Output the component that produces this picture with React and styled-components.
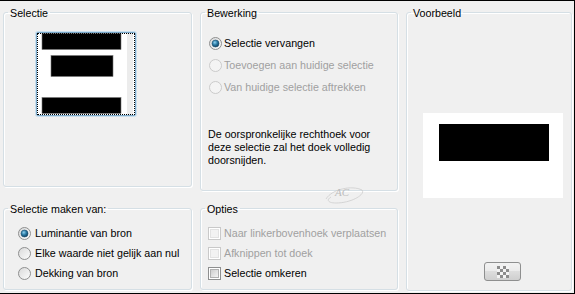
import React from 'react';
import styled, { createGlobalStyle } from 'styled-components';

const GlobalStyle = createGlobalStyle`
  html, body { margin: 0; padding: 0; background: #f0f0f0; }
  body { font-family: "Liberation Sans", Arial, sans-serif; font-size: 10.7px; color: #000; }
`;

const Page = styled.div`
  position: relative;
  box-sizing: border-box;
  width: 575px;
  height: 294px;
  background: #f0f0f0;
  border-top: 1px solid #000;
  border-right: 1px solid #000;
  border-bottom: 1px solid #000;
  padding: 4px 0 0 3px;
  display: flex;
  gap: 8px;
  align-items: flex-start;
`;

const Column = styled.div`
  display: flex;
  flex-direction: column;
  gap: ${p => p.gap}px;
  width: ${p => p.width}px;
`;

const Group = styled.fieldset`
  box-sizing: border-box;
  margin: 0;
  padding: 0;
  min-width: 0;
  width: 100%;
  height: ${p => p.h}px;
  border: 1px solid #d5dfe5;
  border-radius: 3px;
  box-shadow: inset 1px 1px 0 #fff, 1px 1px 0 #fff;
`;

const Legend = styled.legend`
  margin-left: 4px;
  padding: 1px 2px 0;
  line-height: 14px;
  font-size: 10.7px;
`;

const Thumb = styled.div`
  box-sizing: border-box;
  margin: 12px 0 0 32px;
  width: 100px;
  height: 84px;
  border: 1px solid #7aa7c7;
  border-radius: 2px;
  background: #fff;
  box-shadow: 0 0 0 1px #c9dfee;
  display: flex;
`;

const ThumbInner = styled.div`
  flex: 1;
  outline: 1px dotted #000;
  outline-offset: -1px;
  display: flex;
`;

const OptionList = styled.div`
  display: flex;
  flex-direction: column;
  margin-top: ${p => p.top}px;
  padding-left: ${p => p.left}px;
`;

const OptionRow = styled.label`
  display: flex;
  align-items: center;
  gap: ${p => p.gap}px;
  height: ${p => p.h}px;
  color: ${p => (p.disabled ? '#a0a0a0' : '#000')};
  white-space: nowrap;
`;

const Note = styled.p`
  margin: 30px 0 0 7px;
  line-height: 13px;
  width: 180px;
`;

const PreviewCanvas = styled.div`
  box-sizing: border-box;
  margin: 93px 0 0 16px;
  width: 140px;
  height: 85px;
  background: #fff;
  padding: 11px 0 0 16px;
`;

const PreviewShape = styled.div`
  width: 110px;
  height: 37px;
  background: #000;
`;

const ToolButton = styled.button`
  box-sizing: border-box;
  margin: 64px 0 0 77px;
  width: 37px;
  height: 19px;
  padding: 0;
  border: 1px solid #8e8f8f;
  border-radius: 3px;
  background: linear-gradient(#f2f2f2 0%, #ebebeb 45%, #dddddd 50%, #cfcfcf 100%);
  display: flex;
  align-items: center;
  justify-content: center;
`;

const Watermark = styled.div`
  position: absolute;
  left: 322px;
  top: 180px;
  pointer-events: none;
`;

const Radio = ({ checked, disabled }) => (
  <svg width="13" height="13" viewBox="0 0 13 13">
    <defs>
      <linearGradient id="rf" x1="0" y1="0" x2="1" y2="1">
        <stop offset="0" stopColor="#d8d8d8" />
        <stop offset="1" stopColor="#fdfdfd" />
      </linearGradient>
      <radialGradient id="rd" cx="0.4" cy="0.35" r="0.7">
        <stop offset="0" stopColor="#8fd0ef" />
        <stop offset="0.5" stopColor="#2a7aa4" />
        <stop offset="1" stopColor="#0d3b5a" />
      </radialGradient>
    </defs>
    <circle cx="6.5" cy="6.5" r="6" fill={disabled ? '#f4f4f4' : 'url(#rf)'} stroke={disabled ? '#cacaca' : '#8e8f8f'} />
    {checked && <circle cx="6.5" cy="6.5" r="3.5" fill="url(#rd)" stroke="#1c4e6e" strokeWidth="0.6" />}
  </svg>
);

const Check = ({ disabled }) => (
  <svg width="13" height="13" viewBox="0 0 13 13">
    <defs>
      <linearGradient id="cf" x1="0" y1="0" x2="1" y2="1">
        <stop offset="0" stopColor="#cbcbcb" />
        <stop offset="1" stopColor="#f6f6f6" />
      </linearGradient>
    </defs>
    <rect x="0.5" y="0.5" width="12" height="12" fill="#fff" stroke={disabled ? '#c9c9c9' : '#8e8f8f'} />
    <rect x="2.5" y="2.5" width="8" height="8" fill={disabled ? '#f2f2f2' : 'url(#cf)'} stroke={disabled ? '#e2e2e2' : '#b0b0b0'} />
  </svg>
);

const Checker = () => (
  <svg width="12" height="12" viewBox="0 0 12 12">
    {[0, 1, 2, 3].map(r =>
      [0, 1, 2, 3].map(c => (
        <rect key={`${r}-${c}`} x={c * 3} y={r * 3} width="3" height="3" fill={(r + c) % 2 ? '#f4f4f4' : '#8c8c8c'} />
      ))
    )}
  </svg>
);

const SelectionThumb = () => (
  <svg width="98" height="82" viewBox="0 0 98 82">
    <rect x="5" y="0.5" width="79" height="16" fill="#000" stroke="#777" strokeWidth="0.6" />
    <rect x="14" y="22.5" width="62" height="21" fill="#000" stroke="#777" strokeWidth="0.6" />
    <rect x="5" y="64.5" width="79" height="16" fill="#000" stroke="#777" strokeWidth="0.6" />
    <rect x="90" y="0" width="6" height="82" fill="#ececec" />
  </svg>
);

const Signature = () => (
  <svg width="44" height="26" viewBox="0 0 44 26">
    <path d="M4 18 C 10 8, 30 4, 40 9 C 44 13, 30 22, 14 22 C 6 22, 4 19, 9 16" fill="none" stroke="#c8c8c8" strokeWidth="0.7" />
    <text x="13" y="15" fontFamily="Liberation Serif, serif" fontStyle="italic" fontSize="11" fill="#bdbdbd">AC</text>
  </svg>
);

const bewerking = [
  { text: 'Selectie vervangen', checked: true },
  { text: 'Toevoegen aan huidige selectie', disabled: true },
  { text: 'Van huidige selectie aftrekken', disabled: true },
];

const bron = [
  { text: 'Luminantie van bron', checked: true },
  { text: 'Elke waarde niet gelijk aan nul' },
  { text: 'Dekking van bron' },
];

const opties = [
  { text: 'Naar linkerbovenhoek verplaatsen', disabled: true },
  { text: 'Afknippen tot doek', disabled: true },
  { text: 'Selectie omkeren' },
];

export default function App() {
  return (
    <>
      <GlobalStyle />
      <Page>
        <Column width={189} gap={14}>
          <Group h={182}>
            <Legend>Selectie</Legend>
            <Thumb>
              <ThumbInner>
                <SelectionThumb />
              </ThumbInner>
            </Thumb>
          </Group>
          <Group h={89}>
            <Legend>Selectie maken van:</Legend>
            <OptionList top={7} left={14}>
              {bron.map(o => (
                <OptionRow key={o.text} h={20} gap={4}>
                  <Radio checked={o.checked} />
                  {o.text}
                </OptionRow>
              ))}
            </OptionList>
          </Group>
        </Column>
        <Column width={198} gap={10}>
          <Group h={186}>
            <Legend>Bewerking</Legend>
            <OptionList top={12} left={8}>
              {bewerking.map(o => (
                <OptionRow key={o.text} h={22} gap={2} disabled={o.disabled}>
                  <Radio checked={o.checked} disabled={o.disabled} />
                  {o.text}
                </OptionRow>
              ))}
            </OptionList>
            <Note>
              De oorspronkelijke rechthoek voor deze selectie zal het doek volledig doorsnijden.
            </Note>
          </Group>
          <Group h={89}>
            <Legend>Opties</Legend>
            <OptionList top={7} left={7}>
              {opties.map(o => (
                <OptionRow key={o.text} h={20} gap={3} disabled={o.disabled}>
                  <Check disabled={o.disabled} />
                  {o.text}
                </OptionRow>
              ))}
            </OptionList>
          </Group>
        </Column>
        <Column width={166} gap={0}>
          <Group h={286}>
            <Legend>Voorbeeld</Legend>
            <PreviewCanvas>
              <PreviewShape />
            </PreviewCanvas>
            <ToolButton>
              <Checker />
            </ToolButton>
          </Group>
        </Column>
        <Watermark>
          <Signature />
        </Watermark>
      </Page>
    </>
  );
}
